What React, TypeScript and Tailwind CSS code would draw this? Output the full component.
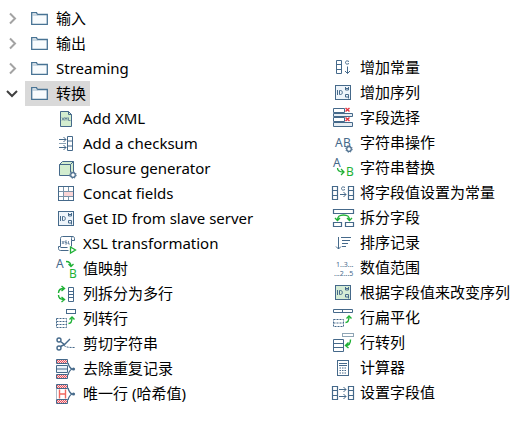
import React, { useState } from "react";

const B = "#45698a";
const G = "#1fb136";
const R = "#e4505c";

type IconProps = { children: React.ReactNode };

function Icon({ children }: IconProps) {
  return (
    <svg
      className="h-[25px] w-6 shrink-0"
      viewBox="0 0 24 25"
      fill="none"
      stroke={B}
      strokeWidth="1"
      aria-hidden="true"
    >
      {children}
    </svg>
  );
}

function Glyph({ x, y, size, color = B, children }: { x: number; y: number; size: number; color?: string; children: string }) {
  return (
    <text x={x} y={y} fontSize={size} fill={color} stroke="none" fontFamily="'Noto Sans', sans-serif">
      {children}
    </text>
  );
}

function Gear({ x, y }: { x: number; y: number }) {
  return (
    <g>
      <circle cx={x} cy={y} r="3.2" fill="#fff" strokeDasharray="1.3 1.2" />
      <circle cx={x} cy={y} r="2.3" fill="#fff" strokeWidth="1.2" />
    </g>
  );
}

const UpArrow = ({ y }: { y: number }) => (
  <g transform={`translate(0 ${y})`} stroke={G} strokeWidth="1.4">
    <path d="M14.5 7.5c2.5 0 3.5-1.5 3.5-6" />
    <path d="M15.5 3.5L18 1l2.5 2.5" />
  </g>
);

const IdCard = ({ fill }: { fill: string }) => (
  <Icon>
    <rect x="4.5" y="5.5" width="15" height="14" fill={fill} />
    <path d="M6.5 10v5M8.5 10.5v4h1c1.2 0 1.8-.8 1.8-2s-.6-2-1.8-2z" />
    <path d="M14.5 7v3h3V7M15 8.5h2M17.5 18.5v-4h-3v2.5h3" />
  </Icon>
);

const FieldPair = ({ children }: IconProps) => (
  <Icon>
    <path d="M1.5 6.5h5v13h-5zM17.5 6.5h5v13h-5z" strokeWidth="1.2" />
    <path d="M1.5 10.5h5M1.5 15.5h5M17.5 10.5h5M17.5 15.5h5" />
    {children}
  </Icon>
);

const Bands = ({ children }: IconProps) => (
  <Icon>
    <path d="M2.5 3.5h11v4h-11zM2.5 18.5h11v4h-11z" fill="#fbdcde" />
    <path d="M3 4.5h10M4 5.5h10M3 6.5h10M3 19.5h10M4 20.5h10M3 21.5h10" stroke={R} strokeDasharray="1 1" />
    <path d="M14 7c1 4 2 5 4 6M14 19c1-4 2-5 4-6" strokeWidth="1.3" />
    <circle cx="19.5" cy="13" r="1.6" fill={B} stroke="none" />
    {children}
  </Icon>
);

const icons = {
  xml: (
    <Icon>
      <path d="M6.5 5.5h8l3 3v12h-11z" fill="#d3edcf" />
      <path d="M14.5 5.5v3h3" />
      <path d="M8 11.5l2 3M10 11.5l-2 3M11 14.5v-3l1 1.5 1-1.5v3M14.5 11.5v3h2" strokeWidth=".7" />
    </Icon>
  ),
  checksum: (
    <Icon>
      <path d="M13.5 5.5h5v14h-5zM13.5 10h5M13.5 15h5" />
      <path d="M5 8.5h7M5 16.5h7M9.5 6l2.5 2.5L9.5 11M9.5 14l2.5 2.5L9.5 19" />
      <path d="M5 12.5h7" stroke="#8ba3b6" />
    </Icon>
  ),
  closure: (
    <Icon>
      <path d="M5.5 8.5l3-3h11v11l-3 3h-11z" fill="#d3edcf" />
      <path d="M5.5 8.5h11v11M16.5 8.5l3-3" />
      <Gear x={19} y={19} />
    </Icon>
  ),
  concat: (
    <Icon>
      <path d="M9.5 10.5h10v5h-10z" fill="#fbd5d5" stroke="none" />
      <path d="M4.5 10.5h15M4.5 15.5h15M9.5 5.5v14M14.5 5.5v5M14.5 15.5v4" stroke="#7a93a8" />
      <rect x="4.5" y="5.5" width="15" height="14" />
    </Icon>
  ),
  id: <IdCard fill="#edf4fa" />,
  idGreen: <IdCard fill="#d5ecd5" />,
  xsl: (
    <Icon>
      <path d="M8.5 5.5h10c1.5 0 2 1 2 2v2h-3v6M8.5 5.5c-1.5 0-2 1-2 2v8h-2v2c0 1.5 1 2 2 2h8M6.5 16.5h7M17.5 9.5v-2c0-1 .5-2 1.5-2" />
      <path d="M8 10l2 3M10 10l-2 3M13 10h-2v1.5h2V13h-2M14.5 10v3H16" strokeWidth=".7" />
      <path d="M16.5 16l5 3-5 3z" stroke={G} fill="#fff" strokeWidth="1.3" />
    </Icon>
  ),
  mapping: (
    <Icon>
      <Glyph x={2} y={12} size={12}>A</Glyph>
      <Glyph x={15} y={22} size={12} color={G}>B</Glyph>
      <path d="M12 5.5c3.5 0 5 1.5 5 5M14.5 8l2.5 2.5L19.5 8" stroke={G} strokeWidth="1.3" />
    </Icon>
  ),
  splitRows: (
    <Icon>
      <path d="M14.5 6.5h5v14h-5zM14.5 10.5h5M14.5 13.5h5M14.5 16.5h5" />
      <path d="M4.5 12c0-3.5 2-4.5 5.5-4.5M7.5 5l3 2.5-3 2.5M4.5 14c0 3.5 2 4.5 5.5 4.5M7.5 16l3 2.5-3 2.5" stroke={G} strokeWidth="1.4" />
    </Icon>
  ),
  colToRow: (
    <Icon>
      <rect x="12.5" y="3.5" width="9" height="4" />
      <path d="M2.5 12.5h10v9h-10zM2.5 15.5h10M2.5 18.5h10" strokeDasharray="2 1" />
      <UpArrow y={10} />
    </Icon>
  ),
  scissors: (
    <Icon>
      <circle cx="5" cy="9" r="2" strokeWidth="1.4" />
      <circle cx="5" cy="17" r="2" strokeWidth="1.4" />
      <path d="M6.5 10.5l4 3L16 8M6.5 15.5l4-2" strokeWidth="1.4" />
      <path d="M10 14.5c2.5 2 5 2 11 2" strokeDasharray="2 1" />
    </Icon>
  ),
  unique: (
    <Bands>
      <path d="M2.5 9.5h11v7h-11zM2.5 13h11" fill="#edf4fa" />
    </Bands>
  ),
  uniqueHash: (
    <Bands>
      <path d="M2.5 8v10" stroke="#a9bbc9" />
      <path d="M5.5 8.5v9M11.5 8.5v9M5.5 13h6" stroke="#f0675f" strokeWidth="1.4" />
    </Bands>
  ),
  constant: (
    <Icon>
      <path d="M5.5 5.5h5v13h-5zM5.5 9.5h5M5.5 14.5h5" />
      <path d="M18 6.5c-2-1.2-3.5-.5-3.5 1s1.5 2.2 3.5 1M16.5 11.5v7M14 16l2.5 2.5L19 16" />
    </Icon>
  ),
  select: (
    <Icon>
      <path d="M2.5 3.5h11v4h-11zM2.5 12.5h11v4h-11z" />
      <path d="M2.5 8.5h19v3h-19zM2.5 17.5h19v4h-19z" fill="#e6edf3" />
      <path d="M14.5 3l4 3.5M18.5 3l-4 3.5M14.5 12.5l4 3.5M18.5 12.5l-4 3.5" stroke="#e23440" strokeWidth="1.5" />
    </Icon>
  ),
  stringOps: (
    <Icon>
      <Glyph x={4} y={17} size={12}>A</Glyph>
      <Glyph x={12} y={17} size={12}>B</Glyph>
      <Gear x={18} y={19} />
    </Icon>
  ),
  replace: (
    <Icon>
      <Glyph x={2} y={12} size={12}>A</Glyph>
      <Glyph x={15} y={21} size={12} color={G}>B</Glyph>
      <path d="M6.5 13c0 3 2 4 6 4M10 14l3 3-3 3" stroke={G} strokeWidth="1.3" />
    </Icon>
  ),
  toConstant: (
    <FieldPair>
      <path d="M14 7.5c-2-1.2-3.5-.5-3.5 1s1.5 2.2 3.5 1M9 14.5h6M12.5 12l2.5 2.5-2.5 2.5" />
    </FieldPair>
  ),
  splitField: (
    <Icon>
      <path d="M2.5 4.5h20v4h-20zM2.5 17.5h8v4h-8zM14.5 17.5h8v4h-8z" strokeWidth="1.2" />
      <path d="M6.5 15.5c0-4.5 2-5.5 6-5.5s6 1 6 5.5M4 13l2.5 2.5L9 13M16 13l2.5 2.5L21 13" stroke={G} strokeWidth="1.4" />
    </Icon>
  ),
  sort: (
    <Icon>
      <path d="M7.5 7v12M5 16.5L7.5 19l2.5-2.5M10 7.5h10M11 10.5h8M11 13.5h6M11 16.5h4" />
    </Icon>
  ),
  range: (
    <Icon>
      <Glyph x={5} y={12} size={7}>1..3...</Glyph>
      <Glyph x={3} y={21} size={7}>...2...5</Glyph>
    </Icon>
  ),
  flatten: (
    <Icon>
      <path d="M2.5 4.5h19v3h-19zM11.5 4.5v3" />
      <path d="M2.5 14.5h10v7h-10zM2.5 18h10" strokeDasharray="2 1" />
      <UpArrow y={10} />
    </Icon>
  ),
  rowToCol: (
    <Icon>
      <rect x="11.5" y="3.5" width="11" height="3" stroke="#8fa5b5" />
      <path d="M2.5 9.5h10v12h-10zM2.5 13.5h10M2.5 17.5h10" />
      <path d="M19.5 9.5c0 4-1.5 6-4.5 6M17.5 12.5l-3 3 3 2.5" stroke={G} strokeWidth="1.4" />
    </Icon>
  ),
  calculator: (
    <Icon>
      <rect x="6.5" y="5.5" width="11" height="15" />
      <path d="M8 8.5h8M8 10.5h8" />
      <path d="M8.5 13h7M8.5 15.5h7M8.5 18h7" strokeDasharray="1.5 1" />
    </Icon>
  ),
  setValue: (
    <FieldPair>
      <path d="M8 9.5h7M12.5 7L15 9.5 12.5 12M8 16.5h7M12.5 14l2.5 2.5-2.5 2.5" />
    </FieldPair>
  ),
};

type Step = { label: string; icon: keyof typeof icons };

const steps: Step[] = [
  { label: "Add XML", icon: "xml" },
  { label: "Add a checksum", icon: "checksum" },
  { label: "Closure generator", icon: "closure" },
  { label: "Concat fields", icon: "concat" },
  { label: "Get ID from slave server", icon: "id" },
  { label: "XSL transformation", icon: "xsl" },
  { label: "值映射", icon: "mapping" },
  { label: "列拆分为多行", icon: "splitRows" },
  { label: "列转行", icon: "colToRow" },
  { label: "剪切字符串", icon: "scissors" },
  { label: "去除重复记录", icon: "unique" },
  { label: "唯一行 (哈希值)", icon: "uniqueHash" },
];

const moreSteps: Step[] = [
  { label: "增加常量", icon: "constant" },
  { label: "增加序列", icon: "id" },
  { label: "字段选择", icon: "select" },
  { label: "字符串操作", icon: "stringOps" },
  { label: "字符串替换", icon: "replace" },
  { label: "将字段值设置为常量", icon: "toConstant" },
  { label: "拆分字段", icon: "splitField" },
  { label: "排序记录", icon: "sort" },
  { label: "数值范围", icon: "range" },
  { label: "根据字段值来改变序列", icon: "idGreen" },
  { label: "行扁平化", icon: "flatten" },
  { label: "行转列", icon: "rowToCol" },
  { label: "计算器", icon: "calculator" },
  { label: "设置字段值", icon: "setValue" },
];

function StepList({ items }: { items: Step[] }) {
  return (
    <ul>
      {items.map((item) => (
        <li key={item.label} className="flex h-[25px] items-center gap-[5px] whitespace-nowrap">
          {icons[item.icon]}
          <span>{item.label}</span>
        </li>
      ))}
    </ul>
  );
}

function Folder({ label, open, onToggle }: { label: string; open: boolean; onToggle: () => void }) {
  return (
    <button type="button" aria-expanded={open} onClick={onToggle} className="flex h-[25px] items-center gap-[7px]">
      <svg className="h-[13px] w-3" viewBox="0 0 12 13" fill="none" strokeWidth="2" aria-hidden="true">
        {open ? <path d="M1 4l5 5 5-5" stroke="#404040" /> : <path d="M4 1.5l5 5-5 5" stroke="#a3a3a3" />}
      </svg>
      <span className={`flex h-[25px] items-center gap-2 pl-[6px] pr-1 ${open ? "bg-[#d9d9d9]" : ""}`}>
        <svg className="h-[13px] w-[17px]" viewBox="0 0 17 13" fill="none" stroke="#487394" strokeWidth="1.3" aria-hidden="true">
          <path d="M.7 12.3V.7h4.8l1 1.8h9.8v9.8z" fill="#f8fbfd" />
          <path d="M1 3h5.5" stroke="#9db5c7" strokeWidth="1" />
        </svg>
        <span>{label}</span>
      </span>
    </button>
  );
}

const folders = ["输入", "输出", "Streaming", "转换"];

export default function App() {
  const [openFolder, setOpenFolder] = useState("转换");
  return (
    <main className="grid min-h-screen grid-cols-[331fr_191fr] bg-white font-['Noto_Sans','Noto_Sans_CJK_SC',sans-serif] text-[15px] leading-[25px] text-black">
      <ul className="pt-[6px] pl-[6px]">
        {folders.map((name) => (
          <li key={name}>
            <Folder label={name} open={openFolder === name} onToggle={() => setOpenFolder(openFolder === name ? "" : name)} />
            {name === "转换" && openFolder === name && (
              <div className="pl-12">
                <StepList items={steps} />
              </div>
            )}
          </li>
        ))}
      </ul>
      <div className="pt-[55px]">{openFolder === "转换" && <StepList items={moreSteps} />}</div>
    </main>
  );
}
